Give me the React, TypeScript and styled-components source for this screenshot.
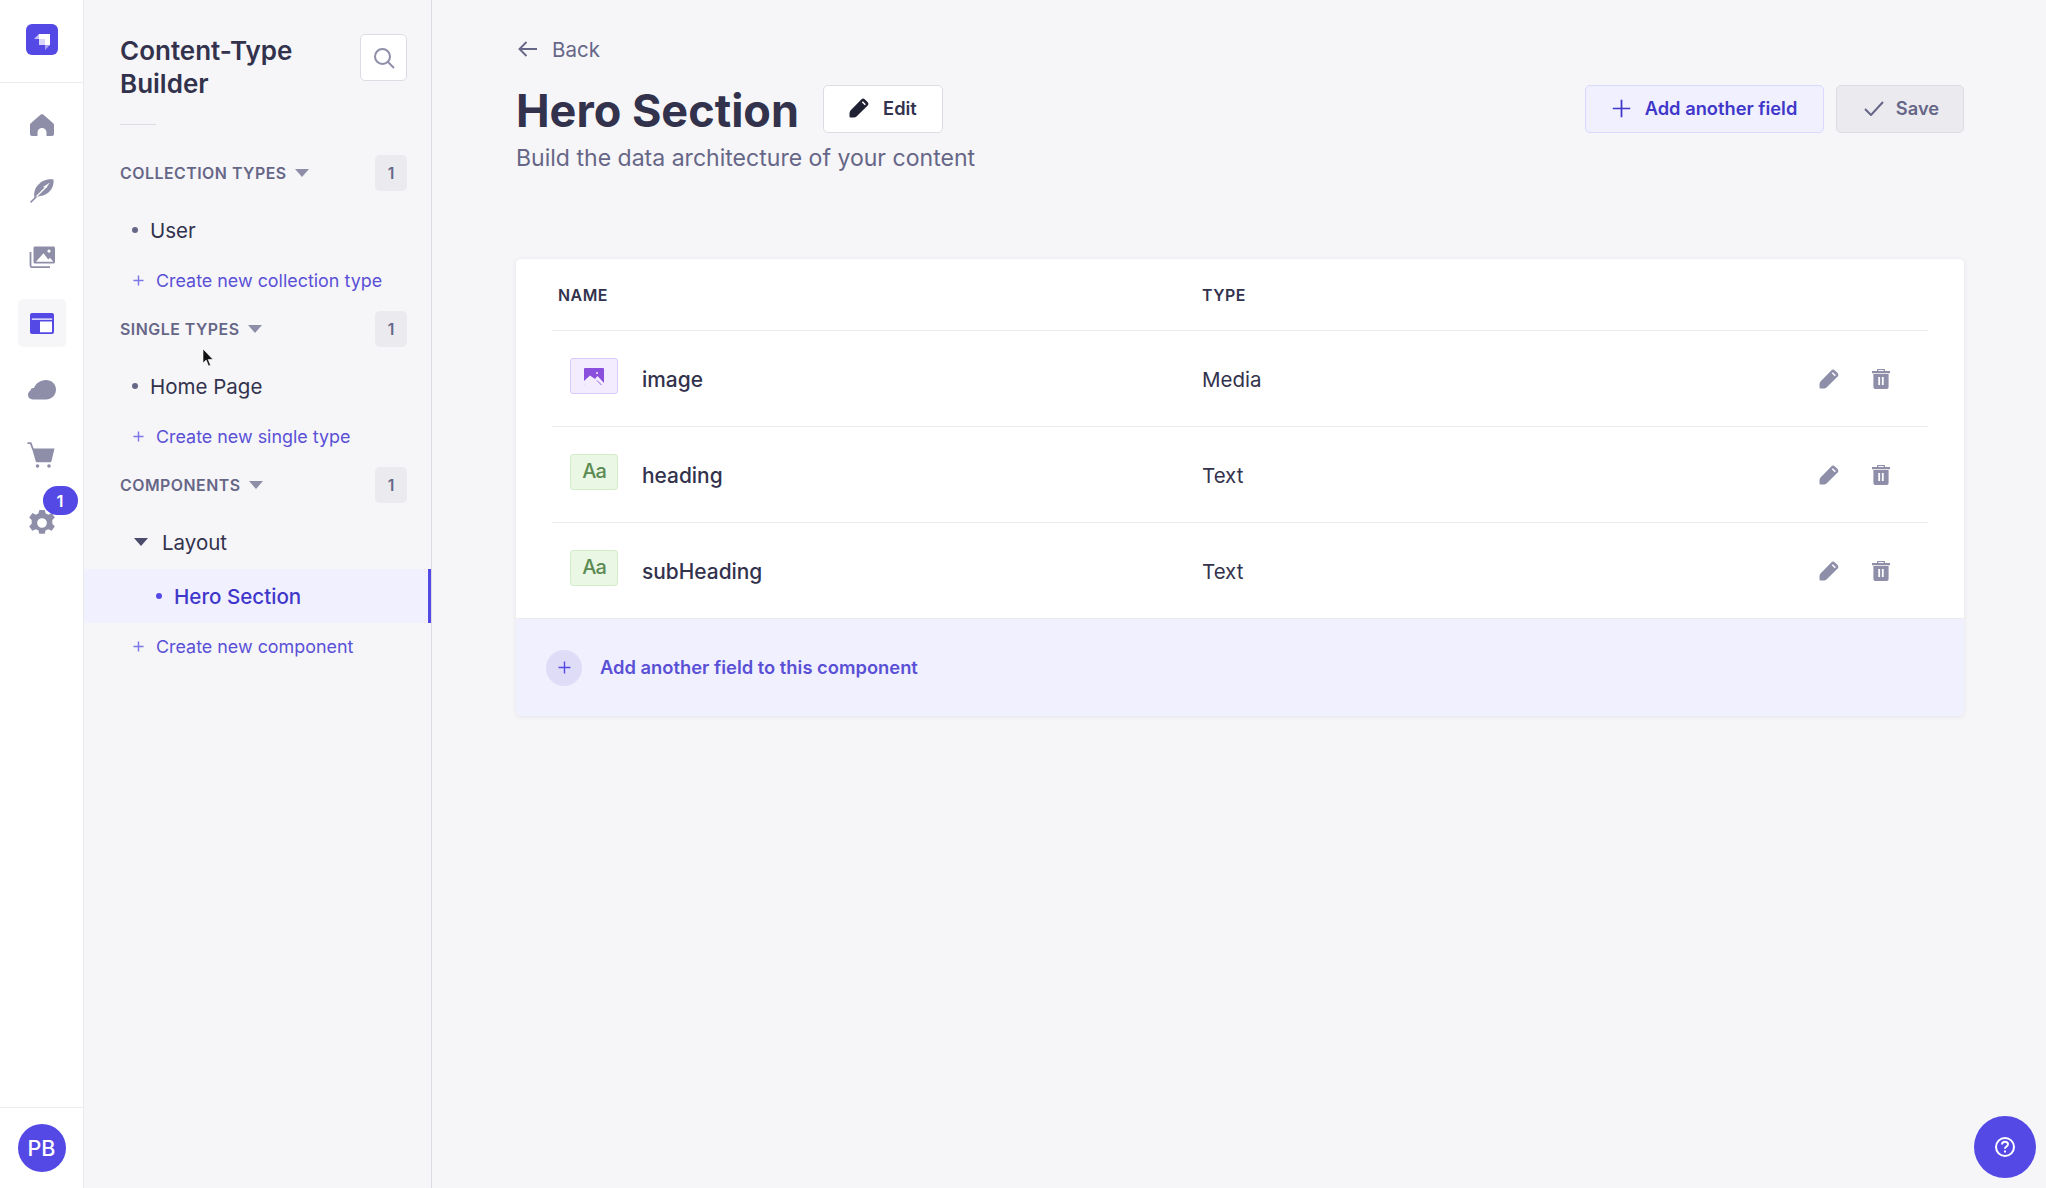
import React from "react";
import styled, { createGlobalStyle } from "styled-components";

const GlobalStyle = createGlobalStyle`
  html, body {
    margin: 0;
    padding: 0;
    height: 100%;
    overflow: hidden;
    background: #f6f6f9;
    font-family: Inter, "Noto Sans", sans-serif;
    color: #32324d;
  }
  * { box-sizing: border-box; }
`;

const PRIMARY = "#5549e6";
const LINK = "#5a50d6";
const ICON = "#8e8ea9";

const Page = styled.div`
  position: relative;
  display: flex;
  width: 2046px;
  height: 1188px;
  background: #f6f6f9;
`;

/* left icon rail */
const Rail = styled.nav`
  display: flex;
  flex-direction: column;
  width: 84px;
  height: 100%;
  background: #ffffff;
  border-right: 1px solid #eaeaef;
`;

const RailHeader = styled.div`
  display: flex;
  align-items: center;
  justify-content: center;
  height: 83px;
  padding-bottom: 3px;
  border-bottom: 1px solid #eaeaef;
`;

const RailList = styled.div`
  flex: 1;
  display: flex;
  flex-direction: column;
  align-items: center;
  gap: 18px;
  padding-top: 18px;
`;

const RailItem = styled.div<{ $active?: boolean }>`
  position: relative;
  display: flex;
  align-items: center;
  justify-content: center;
  width: 48px;
  height: 48px;
  border-radius: 5px;
  background: ${(p) => (p.$active ? "#f6f6f9" : "transparent")};
`;

const RailIcon = styled.svg<{ $nudgeX?: number; $nudgeY?: number }>`
  margin-left: ${(p) => p.$nudgeX || 0}px;
  margin-top: ${(p) => p.$nudgeY || 0}px;
`;

const RailBadge = styled.span`
  position: absolute;
  top: -11px;
  left: 25px;
  display: flex;
  align-items: center;
  justify-content: center;
  width: 35px;
  height: 29px;
  border-radius: 15px;
  background: ${PRIMARY};
  color: #fff;
  font-size: 16.5px;
  font-weight: 600;
`;

const RailFooter = styled.div`
  display: flex;
  align-items: center;
  justify-content: center;
  height: 81px;
  border-top: 1px solid #eaeaef;
`;

const Avatar = styled.div`
  display: flex;
  align-items: center;
  justify-content: center;
  width: 48px;
  height: 48px;
  border-radius: 50%;
  background: ${PRIMARY};
  color: #fff;
  font-size: 21.5px;
  font-weight: 500;
`;

/* content type panel */
const Panel = styled.aside`
  width: 348px;
  height: 100%;
  padding-top: 34px;
  background: #f6f6f9;
  border-right: 1px solid #dcdce4;
`;

const PanelHead = styled.div`
  display: flex;
  justify-content: space-between;
  padding: 0 24px 0 36px;
`;

const PanelTitle = styled.h2`
  margin: 0;
  width: 190px;
  font-size: 26px;
  line-height: 33px;
  font-weight: 600;
`;

const SearchButton = styled.div`
  display: flex;
  align-items: center;
  justify-content: center;
  width: 47px;
  height: 47px;
  background: #fff;
  border: 1px solid #dcdce4;
  border-radius: 5px;
`;

const Divider = styled.div`
  width: 36px;
  height: 1px;
  margin: 24px 0 30px 36px;
  background: #dcdce4;
`;

const SectionHeader = styled.div`
  display: flex;
  align-items: center;
  justify-content: space-between;
  height: 36px;
  padding: 0 24px 0 36px;
`;

const SectionLabel = styled.div`
  display: flex;
  align-items: center;
  gap: 8px;
  color: #666687;
  font-size: 15.9px;
  font-weight: 600;
  letter-spacing: 0.5px;
`;

const CountBadge = styled.span`
  display: flex;
  align-items: center;
  justify-content: center;
  width: 32px;
  height: 36px;
  border-radius: 5px;
  background: #eaeaef;
  color: #666687;
  font-size: 15.6px;
  font-weight: 600;
`;

const Caret = styled.span<{ $color?: string }>`
  display: block;
  width: 0;
  height: 0;
  border-left: 7px solid transparent;
  border-right: 7px solid transparent;
  border-top: 8px solid ${(p) => p.$color || ICON};
`;

const SectionList = styled.div`
  margin-top: 12px;
  margin-bottom: 8px;
`;

const ListItem = styled.div<{ $active?: boolean; $indent: number }>`
  display: flex;
  align-items: center;
  height: 54px;
  padding-left: ${(p) => p.$indent}px;
  font-size: ${(p) => (p.$active ? "20.6px" : "20.5px")};
  color: ${(p) => (p.$active ? "#3f37c9" : "#32324d")};
  font-weight: ${(p) => (p.$active ? 500 : 400)};
  background: ${(p) => (p.$active ? "#f0f0ff" : "transparent")};
  border-right: 3px solid ${(p) => (p.$active ? PRIMARY : "transparent")};
`;

const Dot = styled.span<{ $active?: boolean }>`
  flex: none;
  width: 6px;
  height: 6px;
  margin-right: 12px;
  border-radius: 50%;
  background: ${(p) => (p.$active ? PRIMARY : "#666687")};
`;

const GroupCaret = styled.span`
  margin-right: 14px;
`;

const CreateLink = styled.div`
  display: flex;
  align-items: center;
  gap: 12px;
  height: 46px;
  padding-left: 49px;
  color: ${LINK};
  font-size: 17.9px;
`;

/* main column */
const Main = styled.main`
  flex: 1;
  padding: 34px 82px 0 84px;
`;

const BackLink = styled.div`
  display: flex;
  align-items: center;
  gap: 14px;
  height: 30px;
  padding-left: 2px;
  color: #666687;
  font-size: 20.5px;
`;

const HeaderRow = styled.div`
  display: flex;
  align-items: center;
  margin-top: 21px;
  height: 48px;
`;

const Title = styled.h1`
  margin: 4px 24px 0 0;
  font-size: 45px;
  font-weight: 700;
  line-height: 48px;
  white-space: nowrap;
`;

const Actions = styled.div`
  display: flex;
  gap: 12px;
  margin-left: auto;
`;

const Button = styled.div<{ $variant: "white" | "soft" | "muted"; $width: number }>`
  display: flex;
  align-items: center;
  justify-content: center;
  gap: 14px;
  width: ${(p) => p.$width}px;
  height: 48px;
  padding-bottom: 2px;
  border-radius: 5px;
  font-size: 18.3px;
  font-weight: 600;
  border: 1px solid
    ${(p) =>
      p.$variant === "white" ? "#dcdce4" : p.$variant === "soft" ? "#d9d8ff" : "#dcdce4"};
  background: ${(p) =>
    p.$variant === "white" ? "#fff" : p.$variant === "soft" ? "#f0f0ff" : "#eaeaef"};
  color: ${(p) =>
    p.$variant === "white" ? "#32324d" : p.$variant === "soft" ? "#3f37c9" : "#666687"};
`;

const CheckIcon = styled.svg`
  margin: 0 -2px 0 3px;
`;

const Subtitle = styled.p`
  margin: 10px 0 0;
  color: #666687;
  font-size: 23.05px;
  line-height: 30px;
`;

const Card = styled.section`
  margin-top: 86px;
  background: #fff;
  border-radius: 5px;
  overflow: hidden;
  box-shadow: 0 1px 5px rgba(33, 33, 52, 0.08);
`;

const CardBody = styled.div`
  padding: 0 36px;
`;

const TableRow = styled.div`
  display: grid;
  grid-template-columns: 650px 1fr auto;
  align-items: center;
  height: 96px;
  padding-top: 2px;
  border-bottom: 1px solid #eaeaef;

  &:last-child {
    height: 95px;
    border-bottom: 0;
  }
`;

const TableHead = styled(TableRow)`
  height: 72px;
`;

const HeadCell = styled.div<{ $inset?: number }>`
  padding-left: ${(p) => p.$inset || 0}px;
  font-size: 15.9px;
  font-weight: 600;
  letter-spacing: 0.5px;
  color: #32324d;
`;

const NameCell = styled.div`
  display: flex;
  align-items: center;
  gap: 24px;
  padding-left: 18px;
  font-size: 20.9px;
  font-weight: 500;
`;

const FieldIcon = styled.span<{ $kind: "media" | "text" }>`
  display: flex;
  align-items: center;
  justify-content: center;
  width: 48px;
  height: 36px;
  margin-top: -7px;
  border-radius: 3px;
  border: 1px solid ${(p) => (p.$kind === "media" ? "#d9c9f7" : "#d3efc9")};
  background: ${(p) => (p.$kind === "media" ? "#f3ecff" : "#eaf7e4")};
`;

const AaGlyph = styled.span`
  margin-top: -3px;
  color: #5b8a52;
  font-size: 20px;
  letter-spacing: -1px;
`;

const TypeCell = styled.div`
  font-size: 20.5px;
`;

const RowActions = styled.div`
  display: flex;
  align-items: center;
  gap: 33px;
  margin-top: -2px;
  padding-right: 38px;
`;

const CardFooter = styled.div`
  display: flex;
  align-items: center;
  gap: 18px;
  height: 98px;
  padding: 0 0 2px 30px;
  background: #f0f0ff;
  border-top: 1px solid #eaeaef;
  color: ${LINK};
  font-size: 18.35px;
  font-weight: 600;
`;

const PlusCircle = styled.span`
  display: flex;
  align-items: center;
  justify-content: center;
  width: 36px;
  height: 36px;
  margin-top: 2px;
  border-radius: 50%;
  background: #dfdcf8;
`;

const HelpButton = styled.div`
  position: absolute;
  right: 10px;
  bottom: 10px;
  display: flex;
  align-items: center;
  justify-content: center;
  width: 62px;
  height: 62px;
  border-radius: 50%;
  background: ${PRIMARY};
`;

const Pointer = styled.svg`
  position: absolute;
  left: 202px;
  top: 349px;
`;

const Plus = ({ size = 11, color = "#7d76e8", weight = 1.6 }: { size?: number; color?: string; weight?: number }) => (
  <svg width={size} height={size} viewBox="0 0 12 12" fill="none" stroke={color} strokeWidth={weight}>
    <path d="M6 .5v11M.5 6h11" />
  </svg>
);

const PencilSolid = ({ color }: { color: string }) => (
  <svg width="20" height="20" viewBox="0 0 20 20">
    <path
      fill={color}
      d="M12.500 1.200c.9-.9 2.300-.9 3.200 0l3 3c.9.9.9 2.300 0 3.200L7.500 18.500c-1 .8-2 1-3 1H1.800c-.8 0-1.300-.5-1.300-1.300v-2.700c0-1 .3-2 1-3Z"
    />
    <path fill="none" stroke="#fff" strokeWidth="1.600" d="M13.300 3.700l3 3" />
  </svg>
);

const Trash = () => (
  <svg width="18" height="20" viewBox="0 0 18 20">
    <path fill={ICON} d="M6 0h6c.6 0 1 .4 1 1v1h5v2.200H0V2h5V1c0-.6.4-1 1-1Zm.4 1.100V2h5.200v-.9ZM1.400 5h15.200v13c0 1.100-.9 2-2 2H3.400c-1.100 0-2-.9-2-2Z" />
    <path fill="#fff" d="M6.300 8h1.800v8H6.300Zm3.600 0h1.800v8H9.900Z" />
  </svg>
);

const fields = [
  { name: "image", type: "Media", kind: "media" as const },
  { name: "heading", type: "Text", kind: "text" as const },
  { name: "subHeading", type: "Text", kind: "text" as const },
];

const App: React.FC = () => {
  return (
    <Page>
      <GlobalStyle />
      <Rail>
        <RailHeader>
          <svg width="32" height="31" viewBox="0 0 32 31">
            <rect width="32" height="31" rx="6" fill={PRIMARY} />
            <path fill="#fff" d="M13 10h11v11h-5v-6h-6Z" />
            <path fill="#c5c1f8" d="M8 15h5v-5Z" />
            <path fill="#d8d5fb" d="M13 15h6v6h-6Z" />
            <path fill="#a7a2f3" d="M19 21h5l-5 5Z" />
          </svg>
        </RailHeader>
        <RailList>
          <RailItem>
            <RailIcon width="24" height="22" viewBox="0 0 24 22">
              <path fill={ICON} d="M10.800.6c.7-.6 1.700-.6 2.400 0l10 8.600c.5.500.8 1 .8 1.700V20c0 1.100-.9 2-2 2h-5.500v-3.500a4.500 4.500 0 0 0-9 0V22H2c-1.100 0-2-.9-2-2v-9.100c0-.7.3-1.200.8-1.700Z" />
            </RailIcon>
          </RailItem>
          <RailItem>
            <RailIcon width="24" height="24" viewBox="0 0 24 24">
              <path fill={ICON} d="M13 2C17 0 21 0 23.500.5 24 5 22.500 10 18.500 13.500 15 16.500 11 17 8 17.500L4.500 19C3.500 14 5 9 8 6c1.500-1.500 3-3 5-4Z" />
              <path fill="none" stroke="#fff" strokeWidth="1.300" d="M5.500 18.500 17 7" />
              <path fill="#fff" d="M13 8 20 3.500 16 9Z" />
              <path fill="none" stroke={ICON} strokeWidth="1.600" d="M.6 23.400 6.500 17.500" />
            </RailIcon>
          </RailItem>
          <RailItem>
            <RailIcon width="26" height="23" viewBox="0 0 26 23">
              <path fill="none" stroke={ICON} strokeWidth="1.800" d="M1.500 6v13.500c0 1 .7 1.600 1.500 1.600H21" />
              <path fill={ICON} fillRule="evenodd" d="M6 .5h18.500c.8 0 1.500.7 1.500 1.500v14c0 .8-.7 1.500-1.500 1.500H6c-.8 0-1.500-.7-1.500-1.500V2C4.500 1.200 5.200.5 6 .5Zm14 3a1.600 1.600 0 1 0 0 3.200 1.600 1.600 0 0 0 0-3.200ZM7 15.800h17.200l-3.200-4-1.800 1.700-4.700-6.300Z" />
            </RailIcon>
          </RailItem>
          <RailItem $active>
            <RailIcon width="24" height="21" viewBox="0 0 24 21">
              <rect width="24" height="21" rx="2" fill={PRIMARY} />
              <path fill="#fff" d="M1.800 5.500h20.400v1.200H1.800ZM10 8.500h12v10.700H10Z" />
            </RailIcon>
          </RailItem>
          <RailItem>
            <RailIcon width="28" height="20" viewBox="0 0 28 20" $nudgeY={2}>
              <path fill={ICON} d="M18 0c5.500 0 10 4 10 9.500 0 5.800-4.500 10-10 10H5c-3 0-5-2-5-4.700 0-2 1-3.600 2.600-4.300-.2-1.800 1.400-3 3.400-2.500C7.500 3.800 12 0 18 0Z" />
            </RailIcon>
          </RailItem>
          <RailItem>
            <RailIcon width="28" height="26" viewBox="0 0 28 26" $nudgeX={-2}>
              <path fill="none" stroke={ICON} strokeWidth="1.800" d="M.5 1.200h3.200l2.300 6" />
              <path fill={ICON} d="M5 6.500h22.500l-3 12.500c-.2.800-.8 1.300-1.600 1.300H10.200c-.8 0-1.400-.5-1.600-1.300Z" />
              <circle cx="10.500" cy="24" r="1.800" fill={ICON} />
              <circle cx="22" cy="24" r="1.800" fill={ICON} />
            </RailIcon>
          </RailItem>
          <RailItem>
            <RailIcon width="28" height="28" viewBox="0 0 26 26" $nudgeY={3}>
              <path fill={ICON} fillRule="evenodd" d="M10.500 1h5l.9 3.200 2.500 1.100 3-1.500 3 4-2.300 2.500v3.400l2.300 2.500-3 4-3-1.500-2.500 1.100-.9 3.200h-5l-.9-3.200-2.500-1.100-3 1.500-3-4 2.300-2.500v-3.400L1.100 7.800l3-4 3 1.500 2.500-1.100ZM13 8.500a4.500 4.500 0 1 0 0 9 4.500 4.500 0 0 0 0-9Z" />
            </RailIcon>
            <RailBadge>1</RailBadge>
          </RailItem>
        </RailList>
        <RailFooter>
          <Avatar>PB</Avatar>
        </RailFooter>
      </Rail>

      <Panel>
        <PanelHead>
          <PanelTitle>Content-Type Builder</PanelTitle>
          <SearchButton>
            <svg width="22" height="22" viewBox="0 0 22 22" fill="none" stroke={ICON} strokeWidth="2">
              <circle cx="9.500" cy="9.500" r="7.500" />
              <path d="m15 15 6 6" />
            </svg>
          </SearchButton>
        </PanelHead>
        <Divider />

        <SectionHeader>
          <SectionLabel>
            COLLECTION TYPES <Caret />
          </SectionLabel>
          <CountBadge>1</CountBadge>
        </SectionHeader>
        <SectionList>
          <ListItem $indent={48}>
            <Dot />
            User
          </ListItem>
          <CreateLink>
            <Plus /> Create new collection type
          </CreateLink>
        </SectionList>

        <SectionHeader>
          <SectionLabel>
            SINGLE TYPES <Caret />
          </SectionLabel>
          <CountBadge>1</CountBadge>
        </SectionHeader>
        <SectionList>
          <ListItem $indent={48}>
            <Dot />
            Home Page
          </ListItem>
          <CreateLink>
            <Plus /> Create new single type
          </CreateLink>
        </SectionList>

        <SectionHeader>
          <SectionLabel>
            COMPONENTS <Caret />
          </SectionLabel>
          <CountBadge>1</CountBadge>
        </SectionHeader>
        <SectionList>
          <ListItem $indent={50}>
            <GroupCaret>
              <Caret $color="#4a4a6a" />
            </GroupCaret>
            Layout
          </ListItem>
          <ListItem $active $indent={72}>
            <Dot $active />
            Hero Section
          </ListItem>
          <CreateLink>
            <Plus /> Create new component
          </CreateLink>
        </SectionList>
      </Panel>

      <Main>
        <BackLink>
          <svg width="20" height="16" viewBox="0 0 20 16" fill="none" stroke="#666687" strokeWidth="1.900">
            <path d="M19 8H2M8.500 1 1.500 8l7 7" />
          </svg>
          Back
        </BackLink>
        <HeaderRow>
          <Title>Hero Section</Title>
          <Button $variant="white" $width={120}>
            <PencilSolid color="#212134" />
            Edit
          </Button>
          <Actions>
            <Button $variant="soft" $width={239}>
              <Plus size={19} color="#3f37c9" weight={1.1} />
              Add another field
            </Button>
            <Button $variant="muted" $width={128}>
              <CheckIcon width="20" height="15" viewBox="0 0 20 15" fill="none" stroke="#666687" strokeWidth="2">
                <path d="m1 8 6 6L19 1" />
              </CheckIcon>
              Save
            </Button>
          </Actions>
        </HeaderRow>
        <Subtitle>Build the data architecture of your content</Subtitle>

        <Card>
          <CardBody>
            <TableHead>
              <HeadCell $inset={6}>NAME</HeadCell>
              <HeadCell>TYPE</HeadCell>
            </TableHead>
            {fields.map((f) => (
              <TableRow key={f.name}>
                <NameCell>
                  <FieldIcon $kind={f.kind}>
                    {f.kind === "media" ? (
                      <svg width="20" height="17" viewBox="0 0 20 17">
                        <rect width="20" height="17" rx="1" fill="#8a4fdc" />
                        <path fill="#f3ecff" d="M0 13 6 7.500 11 11l2.500-3 6.500 7v2H1c-.6 0-1-.4-1-1Z" />
                        <path fill="none" stroke="#8a4fdc" strokeWidth=".9" d="M13 12.500l4.500 4.500" />
                        <circle cx="13" cy="5" r="1" fill="#f3ecff" />
                      </svg>
                    ) : (
                      <AaGlyph>Aa</AaGlyph>
                    )}
                  </FieldIcon>
                  {f.name}
                </NameCell>
                <TypeCell>{f.type}</TypeCell>
                <RowActions>
                  <PencilSolid color={ICON} />
                  <Trash />
                </RowActions>
              </TableRow>
            ))}
          </CardBody>
          <CardFooter>
            <PlusCircle>
              <Plus size={13} color={PRIMARY} weight={1.3} />
            </PlusCircle>
            Add another field to this component
          </CardFooter>
        </Card>
      </Main>

      <HelpButton>
        <svg width="22" height="22" viewBox="0 0 22 22" fill="none" stroke="#fff" strokeWidth="2">
          <circle cx="11" cy="11" r="9" />
          <path d="M8 8.500c0-1.700 1.300-2.800 3-2.800s3 1.100 3 2.600c0 2.200-3 2.200-3 4.500" />
          <path d="M11 14.500v2" />
        </svg>
      </HelpButton>

      <Pointer width="12" height="18" viewBox="0 0 12 18">
        <path d="M1 0v14l3.200-3 2.300 6 2-.8-2.300-5.700H11Z" fill="#111" stroke="#fff" strokeWidth=".6" />
      </Pointer>
    </Page>
  );
};

export default App;
